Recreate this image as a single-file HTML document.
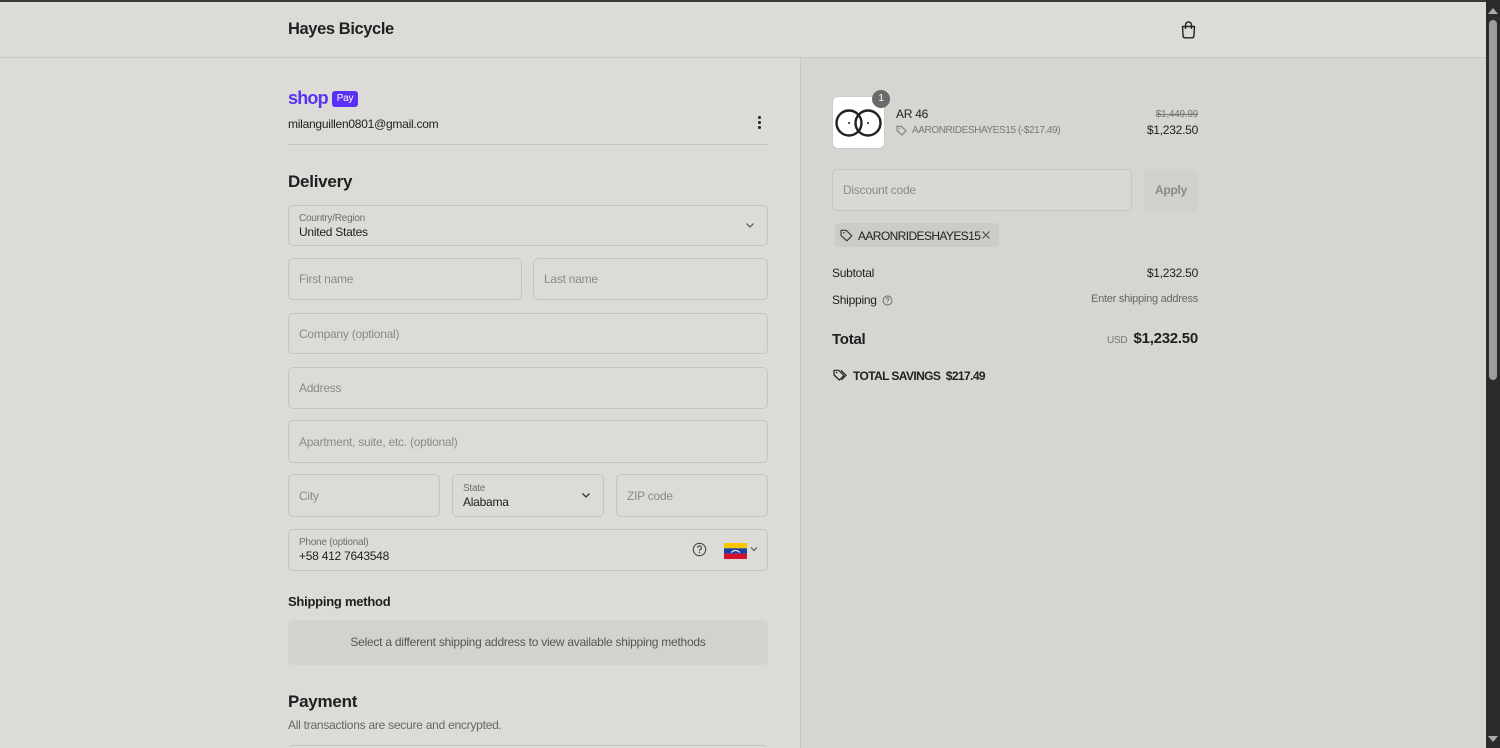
<!DOCTYPE html>
<html><head><meta charset="utf-8">
<style>
*{box-sizing:border-box;margin:0;padding:0}
body{width:1500px;height:748px;overflow:hidden;background:#dcdbd7;font-family:"Liberation Sans",sans-serif;color:#1f1f1f;position:relative;letter-spacing:-0.25px}
.a{position:absolute}
.topline{left:0;top:0;width:1486px;height:2px;background:#3a3a3a}
.hdr{left:0;top:2px;width:1486px;height:56px;border-bottom:1px solid #c8c7c3;background:#dcdbd7}
.right{left:800px;top:58px;width:686px;height:690px;background:#d6d5d1;border-left:1px solid #c8c7c3}
.f{position:absolute;border:1px solid #c6c5c1;border-radius:5px;background:#dcdbd7}
.ph{position:absolute;left:10px;top:50%;transform:translateY(-50%);font-size:12px;color:#8a8a87}
.lab{position:absolute;left:10px;top:7px;font-size:10px;color:#6f6f6c}
.val{position:absolute;left:10px;top:19px;font-size:12px;color:#1f1f1f}
.sb{left:1486px;top:0;width:14px;height:748px;background:#2b2b2b}
</style></head><body>
<div class="a topline"></div>
<div class="a hdr"></div>
<div class="a" style="left:288px;top:20px;font-size:16.5px;font-weight:bold;color:#222;letter-spacing:-0.4px">Hayes Bicycle</div>
<svg class="a" style="left:1180px;top:20px" width="17" height="19" viewBox="0 0 17 19"><path d="M2.5 6.5h12l-.6 9.5a2 2 0 0 1-2 1.8H5.1a2 2 0 0 1-2-1.8z" fill="none" stroke="#222" stroke-width="1.4" stroke-linejoin="round"/><path d="M5.5 9V5a3 3 0 0 1 6 0v4" fill="none" stroke="#222" stroke-width="1.4"/></svg>

<div class="a right"></div>

<div class="a" style="left:288px;top:88px;font-size:18px;font-weight:bold;color:#5a31f4;letter-spacing:-0.8px">shop</div>
<div class="a" style="left:332px;top:91px;width:26px;height:16px;background:#5a31f4;border-radius:3px;color:#fff;font-size:10px;text-align:center;line-height:16px">Pay</div>
<div class="a" style="left:288px;top:117px;font-size:12px">milanguillen0801@gmail.com</div>
<div class="a" style="left:758px;top:116px;width:4px">
<div style="width:3px;height:3px;background:#222;border-radius:50%;margin-bottom:2px"></div><div style="width:3px;height:3px;background:#222;border-radius:50%;margin-bottom:2px"></div><div style="width:3px;height:3px;background:#222;border-radius:50%"></div></div>
<div class="a" style="left:288px;top:144px;width:480px;height:1px;background:#c6c5c1"></div>

<div class="a" style="left:288px;top:172px;font-size:17px;font-weight:bold">Delivery</div>
<div class="f" style="left:288px;top:205px;width:480px;height:41px"><div class="lab">Country/Region</div><div class="val">United States</div>
<svg class="a" style="right:12px;top:16px" width="10" height="7" viewBox="0 0 10 7"><path d="M1.5 1.5l3.5 3.5 3.5-3.5" fill="none" stroke="#555" stroke-width="1.2"/></svg></div>
<div class="f" style="left:288px;top:258px;width:234px;height:42px"><div class="ph">First name</div></div>
<div class="f" style="left:533px;top:258px;width:235px;height:42px"><div class="ph">Last name</div></div>
<div class="f" style="left:288px;top:313px;width:480px;height:41px"><div class="ph">Company (optional)</div></div>
<div class="f" style="left:288px;top:367px;width:480px;height:42px"><div class="ph">Address</div></div>
<div class="f" style="left:288px;top:420px;width:480px;height:43px"><div class="ph">Apartment, suite, etc. (optional)</div></div>
<div class="f" style="left:288px;top:474px;width:152px;height:43px"><div class="ph">City</div></div>
<div class="f" style="left:452px;top:474px;width:152px;height:43px"><div class="lab" style="top:8px">State</div><div class="val" style="top:20px">Alabama</div>
<svg class="a" style="right:12px;top:17px" width="10" height="7" viewBox="0 0 10 7"><path d="M1.5 1.5l3.5 3.5 3.5-3.5" fill="none" stroke="#333" stroke-width="1.3"/></svg></div>
<div class="f" style="left:616px;top:474px;width:152px;height:43px"><div class="ph">ZIP code</div></div>
<div class="f" style="left:288px;top:529px;width:480px;height:42px"><div class="lab" style="top:7px">Phone (optional)</div><div class="val" style="top:19px">+58 412 7643548</div>
<svg class="a" style="left:403px;top:12px" width="15" height="15" viewBox="0 0 15 15"><circle cx="7.5" cy="7.5" r="6.2" fill="none" stroke="#444" stroke-width="1.1"/><path d="M5.6 5.8a1.9 1.9 0 1 1 2.6 1.8c-.5.2-.7.6-.7 1.1v.5" fill="none" stroke="#444" stroke-width="1.1"/><circle cx="7.5" cy="10.8" r=".7" fill="#444"/></svg>
<svg class="a" style="left:435px;top:13px" width="23" height="16" viewBox="0 0 23 16"><rect width="23" height="5.4" fill="#f7c600"/><rect y="5.3" width="23" height="5.4" fill="#1b3fa8"/><rect y="10.6" width="23" height="5.4" fill="#d2102e"/><path d="M7 9.5q4.5-4 9 0" fill="none" stroke="#fff" stroke-width="1"/></svg>
<svg class="a" style="left:461px;top:16px" width="8" height="6" viewBox="0 0 8 6"><path d="M1 1.5l3 3 3-3" fill="none" stroke="#555" stroke-width="1.1"/></svg></div>

<div class="a" style="left:288px;top:594px;font-size:13px;font-weight:bold">Shipping method</div>
<div class="a" style="left:288px;top:620px;width:480px;height:45px;background:#d4d2ce;border-radius:5px;font-size:12px;color:#555;text-align:center;line-height:45px">Select a different shipping address to view available shipping methods</div>
<div class="a" style="left:288px;top:692px;font-size:17px;font-weight:bold">Payment</div>
<div class="a" style="left:288px;top:718px;font-size:12px;color:#666">All transactions are secure and encrypted.</div>
<div class="a" style="left:290px;top:745px;width:476px;height:3px;border:1px solid #c6c5c1;border-bottom:none;border-radius:5px 5px 0 0"></div>

<div class="a" style="left:832px;top:96px;width:53px;height:53px;background:#fff;border:1px solid #ccc;border-radius:6px"></div>
<svg class="a" style="left:834px;top:106px" width="50" height="34" viewBox="0 0 50 34"><circle cx="15" cy="17" r="12.5" fill="none" stroke="#222" stroke-width="2.4"/><circle cx="34" cy="17" r="12.5" fill="none" stroke="#222" stroke-width="2.4"/><circle cx="15" cy="17" r="1" fill="#222"/><circle cx="34" cy="17" r="1" fill="#222"/></svg>
<div class="a" style="left:872px;top:90px;width:18px;height:18px;border-radius:50%;background:#6b6b6b;color:#fff;font-size:10px;text-align:center;line-height:18px">1</div>
<div class="a" style="left:896px;top:107px;font-size:12px">AR 46</div>
<svg class="a" style="left:896px;top:125px" width="11" height="11" viewBox="0 0 11 11"><path d="M1 5.5V1.2h4.3l4.7 4.7-4.1 4.1z" fill="none" stroke="#777" stroke-width="1"/><circle cx="3.3" cy="3.3" r=".7" fill="#777"/></svg>
<div class="a" style="left:912px;top:125px;font-size:10px;color:#777;letter-spacing:-0.4px">AARONRIDESHAYES15 (-$217.49)</div>
<div class="a" style="right:302px;top:109px;font-size:10px;color:#777;text-decoration:line-through">$1,449.99</div>
<div class="a" style="right:302px;top:123px;font-size:12px">$1,232.50</div>

<div class="f" style="left:832px;top:169px;width:300px;height:42px;background:#d9d8d4"><div class="ph">Discount code</div></div>
<div class="a" style="left:1144px;top:169px;width:54px;height:42px;background:#d1d0cc;border-radius:5px;font-size:12px;font-weight:bold;color:#8a8a87;text-align:center;line-height:42px">Apply</div>
<div class="a" style="left:835px;top:223px;width:164px;height:24px;background:#cccbc7;border-radius:4px"></div>
<svg class="a" style="left:840px;top:229px" width="13" height="13" viewBox="0 0 13 13"><path d="M1 6.5V1.3h5.2l5.6 5.6-4.9 4.9z" fill="none" stroke="#333" stroke-width="1.1" stroke-linejoin="round"/><circle cx="3.8" cy="3.8" r=".8" fill="#333"/></svg>
<div class="a" style="left:858px;top:229px;font-size:12px;letter-spacing:-0.6px">AARONRIDESHAYES15</div>
<svg class="a" style="left:981px;top:230px" width="10" height="10" viewBox="0 0 10 10"><path d="M1.5 1.5l7 7M8.5 1.5l-7 7" stroke="#555" stroke-width="1.2"/></svg>

<div class="a" style="left:832px;top:266px;font-size:12px">Subtotal</div>
<div class="a" style="right:302px;top:266px;font-size:12px">$1,232.50</div>
<div class="a" style="left:832px;top:293px;font-size:12px">Shipping</div>
<svg class="a" style="left:882px;top:295px" width="11" height="11" viewBox="0 0 11 11"><circle cx="5.5" cy="5.5" r="4.5" fill="none" stroke="#666" stroke-width=".9"/><path d="M4.2 4.3a1.3 1.3 0 1 1 1.8 1.2c-.4.2-.5.4-.5.8" fill="none" stroke="#666" stroke-width=".9"/><circle cx="5.5" cy="7.8" r=".5" fill="#666"/></svg>
<div class="a" style="right:302px;top:293px;font-size:11px;color:#666">Enter shipping address</div>
<div class="a" style="left:832px;top:331px;font-size:15px;font-weight:bold">Total</div>
<div class="a" style="left:1107px;top:335px;font-size:10px;color:#777">USD</div>
<div class="a" style="right:302px;top:330px;font-size:15px;font-weight:bold">$1,232.50</div>
<svg class="a" style="left:833px;top:369px" width="14" height="13" viewBox="0 0 14 13"><path d="M1 6V1.3h4.7l5.2 5.2-4.5 4.5z" fill="none" stroke="#222" stroke-width="1.2" stroke-linejoin="round"/><path d="M8 1.3l5 5-4.5 4.5" fill="none" stroke="#222" stroke-width="1.2"/><circle cx="3.5" cy="3.6" r=".8" fill="#222"/></svg>
<div class="a" style="left:853px;top:369px;font-size:12px;font-weight:bold;color:#222;letter-spacing:-0.6px">TOTAL SAVINGS&nbsp; $217.49</div>

<div class="a sb"></div>
<div class="a" style="left:1489px;top:20px;width:8px;height:360px;background:#9d9d9d;border-radius:4px"></div>
<svg class="a" style="left:1488px;top:8px" width="10" height="6" viewBox="0 0 10 6"><path d="M0 6L5 0l5 6z" fill="#aaa"/></svg>
<svg class="a" style="left:1488px;top:736px" width="10" height="6" viewBox="0 0 10 6"><path d="M0 0h10L5 6z" fill="#aaa"/></svg>
</body></html>
